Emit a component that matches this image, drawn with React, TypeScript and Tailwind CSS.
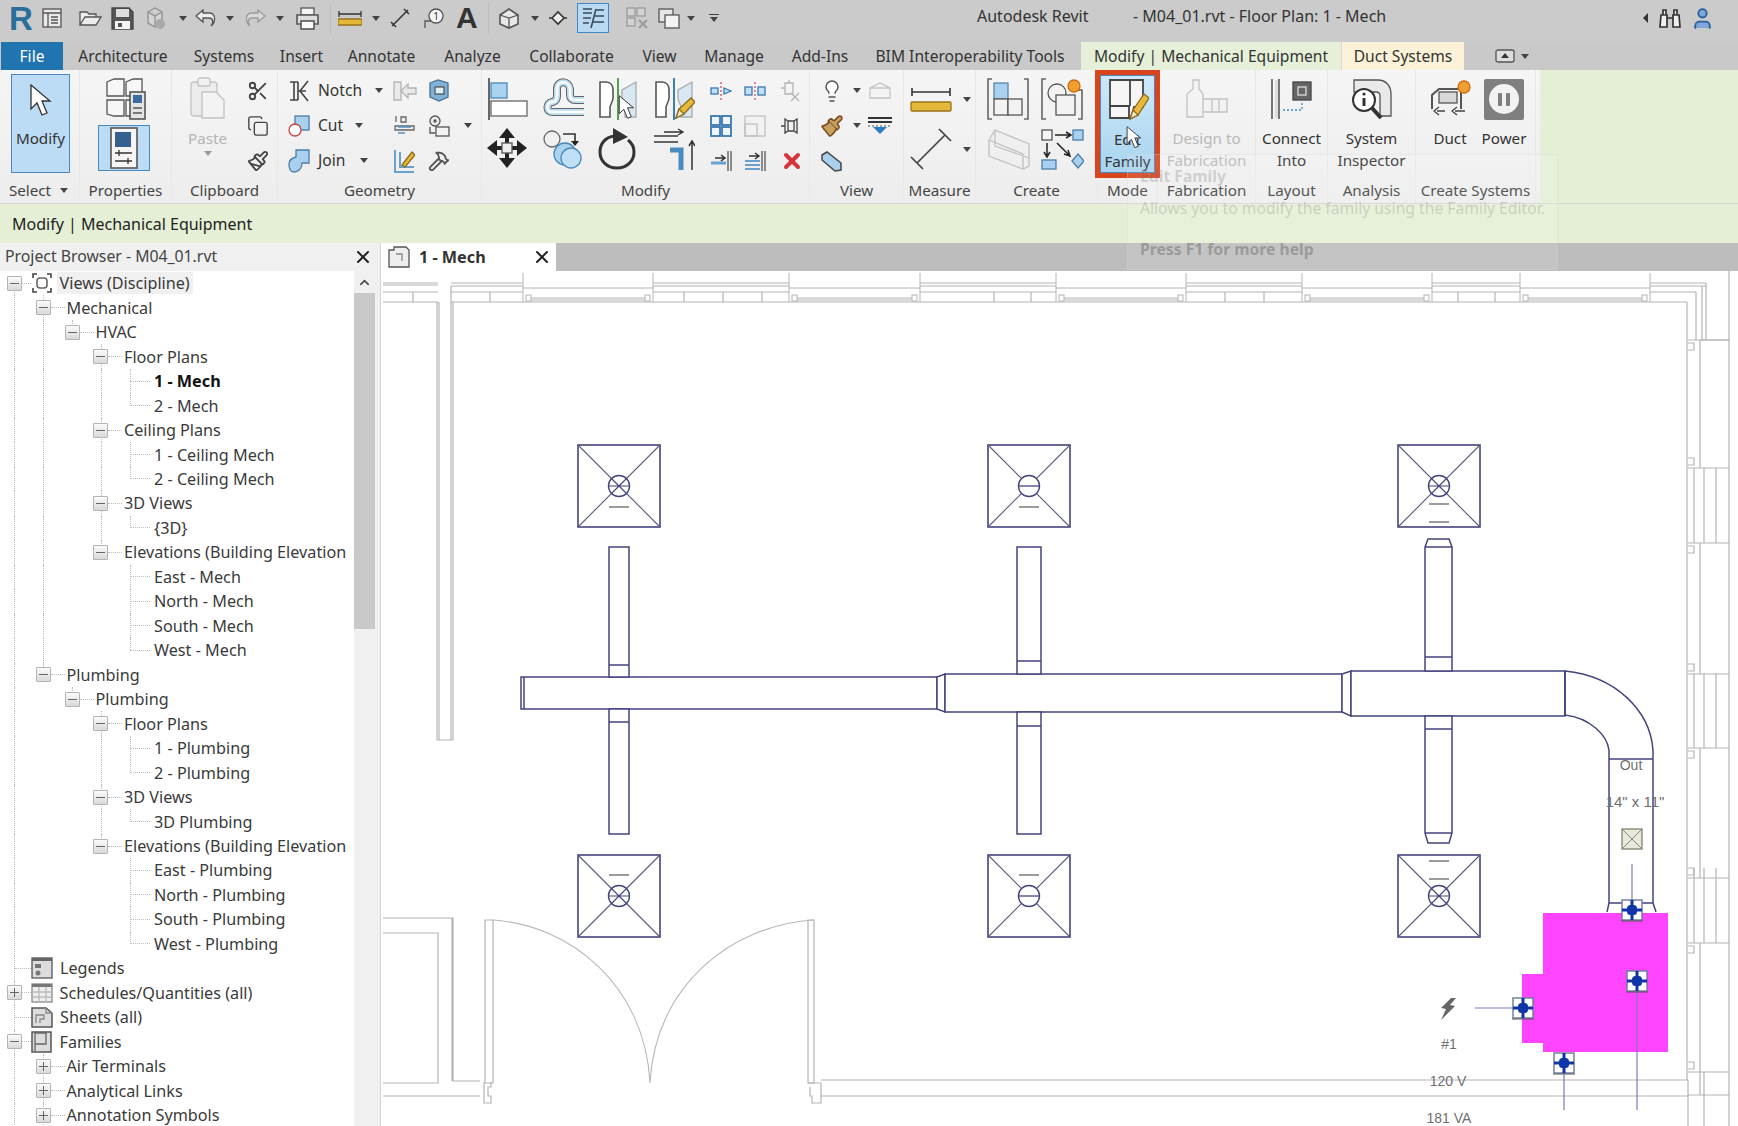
import type { ReactNode } from "react";
import { Scissors, Copy, Hammer, Paintbrush, Lightbulb, X, ChevronUp, User } from "lucide-react";

type IcoProps = { w: number; h: number; children: ReactNode; className?: string };

function Ico({ w, h, children, className }: IcoProps) {
  return (
    <svg width={w} height={h} viewBox={`0 0 ${w} ${h}`} fill="none" stroke="#555" strokeWidth={1.3} className={`block shrink-0 ${className ?? ""}`}>
      {children}
    </svg>
  );
}

function Caret({ faded }: { faded?: boolean }) {
  return (
    <svg width="8" height="5" viewBox="0 0 8 5" className="block shrink-0">
      <polygon points="0,0 8,0 4,5" fill={faded ? "#999" : "#444"} />
    </svg>
  );
}

/* ---------- quick access bar ---------- */

function QuickAccess() {
  return (
    <div className="flex items-center h-[42px] pb-[6px] bg-[#cbcbcb] text-[#333] relative">
      <span className="ml-[9px] w-[22px] text-[33px] leading-none font-bold text-[#2a6e9c] font-['Liberation_Sans',sans-serif]">R</span>
      <Ico w={20} h={22} className="ml-[11px]">
        <rect x="1" y="2" width="18" height="18" fill="#e8e8e8" />
        <path d="M1 6H19M6 6V20M9 10H16M9 13H16M9 16H16" />
      </Ico>
      <Ico w={24} h={20} className="ml-[16px]">
        <path d="M2 17V4H9L11 6H18V9M2 17L7 9H23L18 17Z" fill="#ececec" />
      </Ico>
      <Ico w={23} h={23} className="ml-[9px]">
        <path d="M1 1H18L22 5V22H1Z" fill="#555" stroke="#444" />
        <rect x="5" y="2" width="13" height="8" fill="#ddd" stroke="none" />
        <rect x="4" y="14" width="15" height="8" fill="#f4f4f4" stroke="none" />
        <rect x="7" y="16" width="4" height="4" fill="#555" stroke="none" />
      </Ico>
      <Ico w={24} h={24} className="ml-[9px] opacity-50">
        <path d="M5 6L12 2L19 6V17L12 21L5 17ZM5 6L12 10L19 6M12 10V21" fill="#ddd" />
        <circle cx="17" cy="18" r="5" fill="#888" stroke="none" />
      </Ico>
      <span className="ml-[12px]"><Caret /></span>
      <Ico w={22} h={18} className="ml-[7px]">
        <path d="M9 1L2 7L9 13V9H15C19 9 20 13 17 17C22 13 22 4 15 4H9Z" fill="#eee" />
      </Ico>
      <span className="ml-[10px]"><Caret /></span>
      <Ico w={22} h={18} className="ml-[11px] opacity-40">
        <path d="M13 1L20 7L13 13V9H7C3 9 2 13 5 17C0 13 0 4 7 4H13Z" fill="#eee" />
      </Ico>
      <span className="ml-[9px]"><Caret /></span>
      <Ico w={23} h={23} className="ml-[12px]">
        <rect x="5" y="1" width="13" height="7" fill="#f5f5f5" />
        <path d="M1 8H22V17H1Z" fill="#ddd" strokeWidth={1.6} />
        <rect x="5" y="14" width="13" height="8" fill="#fafafa" strokeWidth={1.6} />
      </Ico>
      <div className="ml-[11px] w-px h-[32px] bg-[#bdbdbd]" />
      <Ico w={24} h={16} className="ml-[7px]">
        <path d="M1 4H23M1 1V7M23 1V7" stroke="#333" />
        <rect x="0" y="9" width="24" height="6" rx="1" fill="#e4b93a" stroke="#97741a" />
      </Ico>
      <span className="ml-[10px]"><Caret /></span>
      <Ico w={22} h={22} className="ml-[9px]">
        <path d="M3 19L19 3M2 15L7 20M15 2L20 7" stroke="#333" strokeWidth={1.5} />
      </Ico>
      <Ico w={23} h={22} className="ml-[11px]">
        <circle cx="14" cy="9" r="7" fill="#f5f5f5" />
        <path d="M9 14L3 14V21" />
        <text x="14" y="13" fontSize="10" fill="#333" stroke="none" textAnchor="middle">1</text>
      </Ico>
      <span className="ml-[11px] w-[20px] text-[30px] leading-none font-bold text-[#333] font-['Liberation_Sans',sans-serif]">A</span>
      <div className="ml-[12px] w-px h-[32px] bg-[#bdbdbd]" />
      <Ico w={22} h={22} className="ml-[9px]">
        <path d="M2 8L11 2L20 8V17L11 21L2 17Z" fill="#e8e8e8" strokeWidth={1.6} />
        <path d="M2 8L11 11L20 8M11 11V21" />
      </Ico>
      <span className="ml-[11px]"><Caret /></span>
      <Ico w={20} h={20} className="ml-[9px]">
        <path d="M1 10H4M16 10H19M4 10L10 4L16 10L10 16Z" fill="#eee" stroke="#333" strokeWidth={1.6} />
      </Ico>
      <div className="ml-[9px] w-[32px] h-[30px] bg-[#b9d9f2] border border-[#3f88c5] flex items-center justify-center">
        <Ico w={24} h={22}>
          <path d="M2 2H11M2 6H11M2 11H10M2 16H8M15 3H23M14 9H23M12 15H23M10 21L15 2" stroke="#3a4a5a" strokeWidth={1.6} />
        </Ico>
      </div>
      <Ico w={22} h={22} className="ml-[17px] opacity-40">
        <rect x="1" y="1" width="8" height="8" fill="#ddd" />
        <rect x="11" y="1" width="8" height="8" fill="#ddd" />
        <rect x="1" y="11" width="8" height="8" fill="#ddd" />
        <path d="M13 13L21 21M21 13L13 21" strokeWidth={2} />
      </Ico>
      <Ico w={22} h={22} className="ml-[10px]">
        <rect x="1" y="2" width="14" height="13" fill="#e6e6e6" />
        <rect x="7" y="8" width="14" height="13" fill="#f3f3f3" />
      </Ico>
      <span className="ml-[7px]"><Caret /></span>
      <div className="ml-[14px] flex flex-col gap-[2px] items-center">
        <div className="w-[10px] h-px bg-[#444]" />
        <Caret />
      </div>
      <span className="ml-[258px] w-[130px] mb-[5px] text-[16px]">Autodesk Revit</span>
      <span className="ml-[26px] w-[300px] mb-[5px] text-[16px] whitespace-nowrap">- M04_01.rvt - Floor Plan: 1 - Mech</span>
      <svg width="5" height="10" viewBox="0 0 5 10" className="ml-[210px] block">
        <polygon points="5,0 5,10 0,5" fill="#333" />
      </svg>
      <Ico w={24} h={22} className="ml-[10px]">
        <path d="M3 8H9V20H2ZM15 8H21L22 20H15ZM9 11H15M5 8V3H8V8M16 8V3H19V8" fill="#f0f0f0" stroke="#333" strokeWidth={1.7} />
      </Ico>
      <User size={25} className="ml-[8px] text-[#2c5f9e] fill-[#7ea6d6]" strokeWidth={1.8} />
    </div>
  );
}

/* ---------- ribbon tabs ---------- */

const tabs = [
  { name: "Architecture", w: "w-[116px]" },
  { name: "Systems", w: "w-[86px]" },
  { name: "Insert", w: "w-[69px]" },
  { name: "Annotate", w: "w-[91px]" },
  { name: "Analyze", w: "w-[91px]" },
  { name: "Collaborate", w: "w-[107px]" },
  { name: "View", w: "w-[69px]" },
  { name: "Manage", w: "w-[80px]" },
  { name: "Add-Ins", w: "w-[92px]" },
  { name: "BIM Interoperability Tools", w: "w-[208px]" },
];

function RibbonTabs() {
  return (
    <div className="flex items-stretch h-[28px] bg-[#c9c9c9] text-[15.6px] leading-[28px] text-[#333]">
      <div className="ml-[1px] w-[62px] mr-[2px] bg-[#2074b0] text-white text-center">File</div>
      {tabs.map((tab) => (
        <div key={tab.name} className={`${tab.w} text-center whitespace-nowrap`}>
          {tab.name}
        </div>
      ))}
      <div className="ml-[7px] w-[260px] bg-[#e6f0d9] text-center whitespace-nowrap">Modify | Mechanical Equipment</div>
      <div className="w-[123px] bg-[#fbf2d8] text-center border-l border-[#d8d8d8]">Duct Systems</div>
      <div className="ml-[31px] flex items-center gap-[6px]">
        <Ico w={20} h={14}>
          <rect x="1" y="1" width="18" height="12" rx="2" fill="#ddd" />
          <polygon points="10,4 14,9 6,9" fill="#333" stroke="none" />
        </Ico>
        <Caret />
      </div>
    </div>
  );
}

/* ---------- ribbon ---------- */

function Panel({ w, label, children, caret }: { w: string; label: string; children: ReactNode; caret?: boolean }) {
  return (
    <div className={`${w} shrink-0 flex flex-col border-r border-[#e8e8e8]`}>
      <div className="h-[108px] flex">{children}</div>
      <div className={`h-[25px] flex items-center justify-center text-[15.2px] text-[#444] ${caret ? "gap-[9px] pr-[2px]" : ""}`}>
        {label}
        {caret && <Caret />}
      </div>
    </div>
  );
}

function BigTool({ icon, lines, faded, w }: { icon: ReactNode; lines: string[]; faded?: boolean; w: string }) {
  return (
    <div className={`${w} flex flex-col items-center pt-[8px]`}>
      <div className="h-[42px] flex items-center">{icon}</div>
      <div className={`mt-[7px] text-[15.2px] leading-[22px] text-center whitespace-nowrap ${faded ? "text-[#b9b9b9]" : "text-[#333]"}`}>
        {lines.map((line) => (
          <div key={line}>{line}</div>
        ))}
      </div>
    </div>
  );
}

function Arrow({ className }: { className?: string }) {
  return (
    <svg width="26" height="32" viewBox="0 0 26 32" className={`block ${className ?? ""}`}>
      <path d="M3 1V25L9 19L14 31L19 29L14 17H22Z" fill="#fff" stroke="#333" strokeWidth="1.3" />
    </svg>
  );
}

function DoorPair({ pencil }: { pencil?: boolean }) {
  return (
    <Ico w={41} h={42}>
      <path d="M2 4H8C13 4 15 8 15 12V20C15 24 12 26 12 30V39H2Z" fill="#fff" strokeWidth={1.6} />
      <path d="M38 4V39H27V30C27 26 24 24 24 20V12Z" fill="#d8e8f3" stroke="#aaa" />
      <path d="M20 0V42" stroke={pencil ? "#3b7fb5" : "#52a050"} strokeWidth={2} />
      {pencil && (
        <>
          <path d="M22 40L25 31L37 20L41 24L30 36Z" fill="#e9b93c" stroke="#8a6a20" />
          <path d="M22 40L25 31L30 36Z" fill="#f8e8c0" stroke="#8a6a20" />
        </>
      )}
    </Ico>
  );
}

const offsetPath = "M41 34H9C3 34 3 25 9 24H10C13 23 14 21 14 18V11C14 2 26 2 27 11V17C27 20 29 22 32 22H41";

function Ribbon() {
  return (
    <div className="flex h-[133px] bg-[#e4efd6]">
      <div className="flex w-[1540px] bg-gradient-to-b from-[#f5f5f5] to-[#ededed]">
        <Panel w="w-[80px]" label="Select" caret>
          <div className="ml-[11px] mt-[4px] w-[59px] h-[99px] bg-[#bcdcf5] border border-[#4a89bd] flex flex-col items-center">
            <Arrow className="mt-[9px]" />
            <span className="mt-[11px] text-[15.2px] leading-[22px] text-[#333]">Modify</span>
          </div>
        </Panel>
        <Panel w="w-[92px]" label="Properties">
          <div className="ml-[19px] flex flex-col items-center">
            <Ico w={42} h={42} className="mt-[8px]">
              <path d="M3 4L10 1H20V18H3ZM3 22H20V38H10L3 36Z" fill="#f7f7f7" />
              <path d="M22 4L29 1H38V18H22ZM22 22H30V38H22Z" fill="#f7f7f7" />
              <rect x="26" y="14" width="15" height="27" fill="#e4e4e4" strokeWidth={1.6} />
              <rect x="29" y="17" width="9" height="8" fill="#3e6c9e" stroke="none" />
              <path d="M29 30H38M29 35H38" />
            </Ico>
            <div className="mt-[5px] -ml-[1px] w-[52px] h-[46px] bg-[#bcdcf5] border border-[#4a89bd] flex items-center justify-center">
              <Ico w={28} h={42}>
                <rect x="1" y="1" width="26" height="40" fill="#f5f5f5" strokeWidth={1.6} />
                <rect x="5" y="5" width="16" height="15" fill="#35608f" stroke="none" />
                <path d="M5 26H22M5 34H22M9 23V29M18 31V37" stroke="#333" />
              </Ico>
            </div>
          </div>
        </Panel>
        <Panel w="w-[106px]" label="Clipboard">
          <div className="ml-[18px] w-[35px] flex flex-col items-center">
            <Ico w={35} h={42} className="mt-[7px] opacity-30">
              <rect x="1" y="5" width="26" height="34" rx="3" fill="#ddd" />
              <rect x="8" y="1" width="12" height="8" rx="2" fill="#eee" />
              <path d="M12 15H26L34 23V41H12Z" fill="#f3f3f3" />
            </Ico>
            <span className="mt-[8px] text-[15.2px] leading-[22px] text-[#b5b5b5]">Paste</span>
            <span className="mt-[2px]"><Caret faded /></span>
          </div>
          <div className="ml-[22px] mt-[3px] grid grid-rows-3 h-[105px] text-[#444]">
            <div className="flex items-center"><Scissors size={22} /></div>
            <div className="flex items-center"><Copy size={22} strokeWidth={1.5} /></div>
            <div className="flex items-center"><Paintbrush size={22} /></div>
          </div>
        </Panel>
        <Panel w="w-[204px]" label="Geometry">
          <div className="ml-[10px] w-[105px] mt-[3px] grid grid-rows-3 h-[105px] text-[15.6px] text-[#333]">
            <div className="flex items-center">
              <Ico w={22} h={22}>
                <path d="M2 2H10M2 20H10M6 2V20M10 2V20M20 1L12 11L20 21M10 11H18" stroke="#444" strokeWidth={1.6} />
              </Ico>
              <span className="ml-[8px]">Notch</span>
              <span className="ml-[13px]"><Caret /></span>
            </div>
            <div className="flex items-center">
              <Ico w={22} h={22}>
                <rect x="7" y="1" width="14" height="14" fill="#a9d0ee" stroke="#4a7ea8" />
                <circle cx="7" cy="15" r="6" fill="#fff" stroke="#c44" />
              </Ico>
              <span className="ml-[8px]">Cut</span>
              <span className="ml-[12px]"><Caret /></span>
            </div>
            <div className="flex items-center">
              <Ico w={22} h={24}>
                <path d="M8 1H21V14H14C14 20 10 23 6 23C2 23 1 19 1 15C1 11 4 9 8 8Z" fill="#a9d0ee" stroke="#4a7ea8" />
              </Ico>
              <span className="ml-[8px]">Join</span>
              <span className="ml-[15px]"><Caret /></span>
            </div>
          </div>
          <div className="w-[35px] mt-[3px] grid grid-rows-3 h-[105px]">
            <div className="flex items-center">
              <Ico w={24} h={22} className="opacity-40">
                <path d="M1 2H8V20H1ZM8 11L15 4V8H23V14H15V18Z" fill="#ddd" />
              </Ico>
            </div>
            <div className="flex items-center">
              <Ico w={22} h={22}>
                <path d="M3 1V7M8 2H13V7H8ZM2 11H21V15H2Z" stroke="#666" />
                <path d="M5 12H18M5 18H12" stroke="#5a8fbc" />
              </Ico>
            </div>
            <div className="flex items-center">
              <Ico w={22} h={24}>
                <path d="M2 1V23H21M7 3V18H21" stroke="#6ba0cc" strokeWidth={2} />
                <path d="M9 16L19 3L22 6L12 18Z" fill="#e9b93c" stroke="#8a6a20" />
              </Ico>
            </div>
          </div>
          <div className="w-[52px] mt-[3px] grid grid-rows-3 h-[105px]">
            <div className="flex items-center">
              <Ico w={22} h={24}>
                <path d="M2 4L10 1L20 4V18L11 22L2 18Z" fill="#7fb2d8" stroke="#4a6f8f" />
                <rect x="7" y="8" width="9" height="7" fill="#dff0fb" />
              </Ico>
            </div>
            <div className="flex items-center gap-[14px]">
              <Ico w={22} h={22}>
                <circle cx="7" cy="6" r="5" fill="#eee" />
                <circle cx="7" cy="6" r="1" fill="#555" />
                <rect x="8" y="12" width="13" height="9" fill="#f4f4f4" />
                <path d="M2 12V18H7" />
              </Ico>
              <Caret />
            </div>
            <div className="flex items-center text-[#555]"><Hammer size={22} /></div>
          </div>
        </Panel>
        <Panel w="w-[328px]" label="Modify">
          <div className="ml-[5px] mt-[8px] w-[222px] grid grid-cols-4 grid-rows-[42px_42px] gap-y-[8px]">
            <Ico w={41} h={42}>
              <path d="M2 0V42" stroke="#666" strokeWidth={2} />
              <rect x="4" y="5" width="16" height="15" fill="#a9d3f0" stroke="#4a88b8" />
              <rect x="4" y="23" width="36" height="15" fill="#fff" stroke="#666" />
            </Ico>
            <Ico w={41} h={42}>
              <path d={offsetPath} stroke="#666" strokeWidth={8} />
              <path d={offsetPath} stroke="#b9dcf3" strokeWidth={6} />
              <path d={offsetPath} stroke="#fff" strokeWidth={2.4} />
            </Ico>
            <div className="relative w-[41px] h-[42px]">
              <DoorPair />
              <Arrow className="absolute left-[19px] top-[17px] scale-75 origin-top-left" />
            </div>
            <DoorPair pencil />
            <Ico w={41} h={42}>
              <g fill="#222" stroke="none">
                <polygon points="20,0 28,10 12,10" />
                <polygon points="20,40 28,30 12,30" />
                <polygon points="0,20 10,12 10,28" />
                <polygon points="40,20 30,12 30,28" />
                <rect x="18" y="9" width="4" height="6" />
                <rect x="18" y="25" width="4" height="6" />
                <rect x="9" y="18" width="6" height="4" />
                <rect x="25" y="18" width="6" height="4" />
              </g>
              <rect x="15" y="15" width="10" height="10" fill="#eee" stroke="#555" />
            </Ico>
            <Ico w={40} h={42}>
              <circle cx="9" cy="11" r="8" fill="#f0f0f0" stroke="#666" />
              <path d="M20 6H32V14" stroke="#333" strokeWidth={1.6} />
              <polygon points="28,13 36,13 32,18" fill="#222" stroke="none" />
              <circle cx="22" cy="26" r="11" fill="#a9d3f0" stroke="#4a88b8" />
              <circle cx="28" cy="30" r="10" fill="#bfe0f6" stroke="#4a88b8" />
            </Ico>
            <Ico w={38} h={42}>
              <path d="M17 8C6 9 2 17 2 24C2 33 9 40 19 40C29 40 36 33 36 24C36 19 34 15 30 12" stroke="#333" strokeWidth={3} />
              <polygon points="15,0 30,9 15,16" fill="#333" stroke="none" />
            </Ico>
            <Ico w={41} h={42}>
              <path d="M0 8H24M0 14H24" stroke="#666" strokeWidth={2} />
              <path d="M16 22H27V42" stroke="#4a8bc0" strokeWidth={5} />
              <path d="M10 4H28M24 1L29 4L24 7" stroke="#333" />
              <path d="M38 42V14M35 18L38 13L41 18" stroke="#333" strokeWidth={1.5} />
            </Ico>
          </div>
          <div className="ml-[1px] mt-[3px] grid grid-cols-[34px_36px_22px] grid-rows-3 h-[105px] items-center">
            <Ico w={22} h={18}>
              <path d="M11 0V18" stroke="#d84a6a" strokeDasharray="2 2" />
              <rect x="1" y="6" width="7" height="6" fill="#bfe0f6" stroke="#3a78b0" />
              <path d="M14 6L21 9L14 12Z" fill="#bfe0f6" stroke="#3a78b0" />
            </Ico>
            <Ico w={22} h={18}>
              <path d="M11 0V18" stroke="#d84a6a" strokeDasharray="2 2" />
              <rect x="1" y="5" width="7" height="8" fill="#bfe0f6" stroke="#3a78b0" />
              <rect x="14" y="5" width="7" height="8" fill="#bfe0f6" stroke="#3a78b0" />
            </Ico>
            <Ico w={20} h={22} className="opacity-40">
              <path d="M1 8H5M5 3H13V14H5ZM9 3V0M11 13L19 21M19 13L11 21" />
            </Ico>
            <Ico w={22} h={22}>
              <g fill="#eef6fc" stroke="#3a78b0" strokeWidth={1.8}>
                <rect x="1" y="1" width="9" height="9" />
                <rect x="12" y="1" width="9" height="9" />
                <rect x="1" y="12" width="9" height="9" />
                <rect x="12" y="12" width="9" height="9" />
              </g>
            </Ico>
            <Ico w={22} h={22} className="opacity-30">
              <rect x="1" y="1" width="20" height="20" />
              <rect x="1" y="9" width="12" height="12" />
            </Ico>
            <Ico w={20} h={20}>
              <path d="M1 10H5M5 3L8 5H14L17 3V17L14 15H8L5 17ZM8 5V15M14 5V15" stroke="#444" />
            </Ico>
            <Ico w={22} h={22}>
              <path d="M18 1V21M21 1V21" stroke="#555" />
              <path d="M1 13H16" stroke="#6ba0cc" strokeWidth={3} />
              <path d="M5 8H15M11 5L15 8L11 11" stroke="#333" strokeWidth={1.5} />
            </Ico>
            <Ico w={22} h={22}>
              <path d="M18 1V21M21 1V21" stroke="#555" />
              <path d="M1 11H16M1 15H16M1 19H16" stroke="#6ba0cc" strokeWidth={2} />
              <path d="M5 6H15M11 3L15 6L11 9" stroke="#333" strokeWidth={1.5} />
            </Ico>
            <X size={24} strokeWidth={4} className="text-[#d8353a]" />
          </div>
        </Panel>
        <Panel w="w-[94px]" label="View">
          <div className="ml-[10px] mt-[3px] grid grid-cols-[48px_24px] grid-rows-3 h-[105px] items-center">
            <div className="flex items-center gap-[9px]">
              <Lightbulb size={24} className="text-[#555] fill-[#fff]" strokeWidth={1.5} />
              <Caret />
            </div>
            <Ico w={24} h={22} className="opacity-30">
              <path d="M2 8L12 3L22 8V18H2ZM2 8H22" />
            </Ico>
            <div className="flex items-center gap-[9px]">
              <Paintbrush size={24} className="text-[#7a4a20] fill-[#c8a060]" strokeWidth={1.5} />
              <Caret />
            </div>
            <Ico w={24} h={20}>
              <path d="M0 2H24M0 6H24" stroke="#333" strokeWidth={2} />
              <path d="M0 10H24" stroke="#888" strokeDasharray="2 2" />
              <polygon points="12,18 19,11 5,11" fill="#2f7ac0" stroke="none" />
            </Ico>
            <Ico w={22} h={22}>
              <path d="M2 5L7 2L21 13V20L15 21L2 10Z" fill="#a9d0ee" stroke="#444" strokeWidth={1.5} />
            </Ico>
          </div>
        </Panel>
        <Panel w="w-[72px]" label="Measure">
          <div className="ml-[6px] mt-[8px] flex flex-col gap-[8px]">
            <div className="h-[42px] flex items-center gap-[11px]">
              <Ico w={42} h={26}>
                <path d="M2 6H40M2 2V10M40 2V10" stroke="#333" strokeWidth={1.6} />
                <rect x="1" y="16" width="40" height="9" rx="1" fill="#e4b93a" stroke="#97741a" />
              </Ico>
              <Caret />
            </div>
            <div className="h-[42px] flex items-center gap-[11px]">
              <Ico w={42} h={42}>
                <path d="M7 35L35 7M1 29L13 41M29 1L41 13" stroke="#444" strokeWidth={1.7} />
              </Ico>
              <Caret />
            </div>
          </div>
        </Panel>
        <Panel w="w-[122px]" label="Create">
          <div className="ml-[11px] mt-[8px] grid grid-cols-[54px_44px] grid-rows-[42px_42px] gap-y-[8px]">
            <Ico w={42} h={42}>
              <path d="M5 1H1V41H5M37 1H41V41H37" stroke="#666" strokeWidth={1.6} />
              <rect x="7" y="5" width="14" height="16" fill="#a9d0ee" stroke="#5a87a8" />
              <rect x="7" y="21" width="14" height="16" fill="#f3f3f3" />
              <rect x="21" y="21" width="14" height="16" fill="#f3f3f3" />
            </Ico>
            <Ico w={42} h={42}>
              <path d="M5 1H1V41H5M37 12H41V41H37" stroke="#666" strokeWidth={1.6} />
              <circle cx="16" cy="15" r="9" fill="#f3f3f3" />
              <rect x="15" y="17" width="19" height="20" fill="#f3f3f3" />
              <circle cx="33" cy="8" r="6" fill="#f0a030" stroke="#d06a10" />
            </Ico>
            <Ico w={45} h={42} className="opacity-30">
              <path d="M2 12L8 2L42 16V38L36 41L2 28Z" fill="#eee" />
              <path d="M8 2V18L42 30M2 12L36 26V41" />
            </Ico>
            <Ico w={43} h={42}>
              <rect x="1" y="2" width="10" height="10" fill="#f5f5f5" />
              <rect x="32" y="2" width="10" height="10" fill="#a9d0ee" stroke="#4a7ea8" />
              <rect x="1" y="32" width="14" height="9" fill="#a9d0ee" stroke="#4a7ea8" />
              <path d="M31 33L37 26L43 33L37 40Z" fill="#a9d0ee" stroke="#4a7ea8" />
              <path d="M14 7H29M25 4L30 7L25 10M6 15V28M3 24L6 29L9 24M16 15L28 27M23 26L29 28L27 22" stroke="#222" strokeWidth={1.5} />
            </Ico>
          </div>
        </Panel>
        <Panel w="w-[60px]" label="Mode">
          <div className="-ml-[3px] w-[65px] h-[108px] shrink-0 border-[5px] border-[#d8451c] relative">
            <div className="h-full bg-gradient-to-b from-[#cde8f9] to-[#a8d4ef] border border-[#4a89bd] flex flex-col items-center pt-[3px] text-[15.2px] leading-[22px] text-[#333]">
              <Ico w={42} h={42}>
                <path d="M3 1H36V28H27L25 39H3Z" fill="#f5f5f5" strokeWidth={1.8} stroke="#444" />
                <path d="M3 27H22V39M23 1V27" stroke="#444" strokeWidth={1.8} />
                <path d="M23 40L26 31L37 15L42 19L31 36Z" fill="#e9b93c" stroke="#8a6a20" />
                <path d="M23 40L26 31L31 36Z" fill="#f8e8c0" stroke="#8a6a20" />
              </Ico>
              <div className="mt-[7px] text-center">
                <div>Edit</div>
                <div>Family</div>
              </div>
            </div>
            <Arrow className="absolute left-[25px] top-[51px] scale-[0.7] origin-top-left" />
          </div>
        </Panel>
        <Panel w="w-[98px]" label="Fabrication">
          <BigTool
            w="w-full"
            faded
            lines={["Design to", "Fabrication"]}
            icon={
              <Ico w={43} h={40} className="opacity-30">
                <path d="M8 1H14V10L18 15V38H2V15L8 10ZM18 20H42V33H18ZM27 20V33M34 20V33" />
              </Ico>
            }
          />
        </Panel>
        <Panel w="w-[72px]" label="Layout">
          <BigTool
            w="w-full"
            lines={["Connect", "Into"]}
            icon={
              <Ico w={41} h={42}>
                <path d="M1 1V41M8 1V41" stroke="#777" strokeWidth={2} />
                <rect x="4" y="2" width="3" height="38" fill="#ddd" stroke="none" />
                <rect x="22" y="4" width="18" height="18" fill="#666" stroke="#444" />
                <rect x="27" y="9" width="8" height="8" stroke="#ddd" />
                <path d="M12 32H31V22" stroke="#3a8ac8" strokeDasharray="2 2" />
              </Ico>
            }
          />
        </Panel>
        <Panel w="w-[88px]" label="Analysis">
          <BigTool
            w="w-full"
            lines={["System", "Inspector"]}
            icon={
              <Ico w={40} h={42}>
                <path d="M2 2H26C34 2 39 8 39 16V38H28V18C28 15 26 14 24 14H2Z" fill="#e9e9e9" />
                <circle cx="12" cy="22" r="11" fill="#fff" stroke="#333" strokeWidth={2} />
                <path d="M20 30L29 40" stroke="#333" strokeWidth={4} />
                <path d="M12 20V28" stroke="#333" strokeWidth={3} />
                <circle cx="12" cy="16" r="1.6" fill="#333" stroke="none" />
              </Ico>
            }
          />
        </Panel>
        <Panel w="w-[120px]" label="Create Systems">
          <BigTool
            w="w-[68px]"
            lines={["Duct"]}
            icon={
              <Ico w={43} h={40}>
                <path d="M3 30V16L10 10H32V30" stroke="#555" strokeWidth={2} />
                <rect x="10" y="13" width="18" height="11" fill="#d8d8d8" />
                <path d="M8 32H16M26 32H36M10 28L5 32L10 36M28 28L23 32L28 36" stroke="#444" />
                <circle cx="35" cy="8" r="6" fill="#f0a030" stroke="#d06a10" />
              </Ico>
            }
          />
          <BigTool
            w="w-[40px]"
            lines={["Power"]}
            icon={
              <div className="w-[40px] h-[41px] rounded-[2px] bg-[#7f7f7f] flex items-center justify-center">
                <div className="w-[30px] h-[30px] rounded-full bg-[#f2f2f2] flex items-center justify-center gap-[4px]">
                  <div className="w-[4px] h-[13px] bg-[#7f7f7f] rounded-[1px]" />
                  <div className="w-[4px] h-[13px] bg-[#7f7f7f] rounded-[1px]" />
                </div>
              </div>
            }
          />
        </Panel>
      </div>
    </div>
  );
}

/* ---------- project browser ---------- */

type TreeNode = { label: string; bold?: boolean; closed?: boolean; more?: boolean; icon?: string; children?: TreeNode[] };
type FlatRow = TreeNode & { depth: number; guides: number[]; last: boolean; first: boolean };

const leaves = (...names: string[]): TreeNode[] => names.map((label) => ({ label }));

const tree: TreeNode[] = [
  {
    label: "Views (Discipline)",
    icon: "views",
    children: [
      {
        label: "Mechanical",
        children: [
          {
            label: "HVAC",
            children: [
              { label: "Floor Plans", children: [{ label: "1 - Mech", bold: true }, { label: "2 - Mech" }] },
              { label: "Ceiling Plans", children: leaves("1 - Ceiling Mech", "2 - Ceiling Mech") },
              { label: "3D Views", children: leaves("{3D}") },
              { label: "Elevations (Building Elevation", children: leaves("East - Mech", "North - Mech", "South - Mech", "West - Mech") },
            ],
          },
        ],
      },
      {
        label: "Plumbing",
        children: [
          {
            label: "Plumbing",
            children: [
              { label: "Floor Plans", children: leaves("1 - Plumbing", "2 - Plumbing") },
              { label: "3D Views", children: leaves("3D Plumbing") },
              { label: "Elevations (Building Elevation", children: leaves("East - Plumbing", "North - Plumbing", "South - Plumbing", "West - Plumbing") },
            ],
          },
        ],
      },
    ],
  },
  { label: "Legends", icon: "legend" },
  { label: "Schedules/Quantities (all)", icon: "schedule", closed: true, children: [] },
  { label: "Sheets (all)", icon: "sheet" },
  {
    label: "Families",
    icon: "family",
    more: true,
    children: [
      { label: "Air Terminals", closed: true, children: [] },
      { label: "Analytical Links", closed: true, children: [] },
      { label: "Annotation Symbols", closed: true, more: true, children: [] },
    ],
  },
];

const levelX = [14, 43, 72, 100.5, 129.5];

function flatten(nodes: TreeNode[], depth: number, guides: number[], out: FlatRow[]) {
  nodes.forEach((node, i) => {
    const last = i === nodes.length - 1 && !node.more;
    out.push({ ...node, depth, guides, last, first: depth === 0 && i === 0 });
    if (node.children && !node.closed) {
      flatten(node.children, depth + 1, last ? guides : [...guides, levelX[depth]], out);
    }
  });
  return out;
}

function TreeIcon({ kind }: { kind: string }) {
  if (kind === "views") {
    return (
      <Ico w={22} h={22}>
        <path d="M2 6V2H6M16 2H20V6M20 16V20H16M6 20H2V16" stroke="#444" strokeWidth={1.6} />
        <rect x="6" y="6" width="10" height="10" rx="3" stroke="#666" strokeWidth={1.6} />
      </Ico>
    );
  }
  if (kind === "legend") {
    return (
      <Ico w={22} h={22}>
        <rect x="1" y="1" width="20" height="20" fill="#ddd" />
        <rect x="1" y="1" width="20" height="3" fill="#666" stroke="none" />
        <rect x="4" y="7" width="6" height="4" fill="#777" stroke="none" />
        <circle cx="7" cy="16" r="2.5" fill="#777" stroke="none" />
      </Ico>
    );
  }
  if (kind === "schedule") {
    return (
      <Ico w={22} h={20}>
        <rect x="1" y="1" width="20" height="18" fill="#eee" stroke="#888" />
        <rect x="1" y="1" width="20" height="3" fill="#777" stroke="none" />
        <path d="M1 9H21M1 14H21M8 4V19M15 4V19" stroke="#bbb" />
      </Ico>
    );
  }
  if (kind === "sheet") {
    return (
      <Ico w={22} h={21}>
        <path d="M1 1H15L21 6V20H1Z" fill="#ddd" strokeWidth={1.5} />
        <path d="M15 1V6H21M5 16V8H13V12H9V16" stroke="#888" />
      </Ico>
    );
  }
  return (
    <Ico w={21} h={22}>
      <rect x="1" y="1" width="19" height="20" fill="#ddd" strokeWidth={1.5} />
      <path d="M4 2H15V13H4ZM4 13V20" stroke="#666" />
    </Ico>
  );
}

function TreeRow({ row }: { row: FlatRow }) {
  const x = levelX[row.depth];
  const hasBox = row.children !== undefined;
  return (
    <div className="relative flex items-center h-[24.47px] whitespace-nowrap" style={{ paddingLeft: hasBox ? x - 7.5 : x }}>
      {row.guides.map((g) => (
        <span key={g} className="absolute top-0 bottom-0 border-l border-dotted border-[#bdbdbd]" style={{ left: g }} />
      ))}
      {!row.first && <span className={`absolute top-0 border-l border-dotted border-[#bdbdbd] ${row.last ? "h-1/2" : "bottom-0"}`} style={{ left: x }} />}
      {row.first && <span className="absolute top-1/2 bottom-0 border-l border-dotted border-[#bdbdbd]" style={{ left: x }} />}
      {hasBox ? (
        <span className="relative w-[15px] h-[15px] shrink-0 border border-[#b4b4b4] rounded-[1px] bg-gradient-to-b from-[#fbfbfb] to-[#d9d9d9] flex items-center justify-center">
          <span className="w-[9px] h-px bg-[#666]" />
          {row.closed && <span className="absolute w-px h-[9px] bg-[#666]" />}
        </span>
      ) : null}
      <span
        className={`h-px border-t border-dotted border-[#bdbdbd] ${row.icon ? "w-[9px]" : hasBox ? "w-[14px] mr-[2px]" : "w-[20px] mr-[4.5px]"} ${row.icon && !hasBox ? "ml-[1px] w-[16px]" : ""}`}
      />
      {row.icon && (
        <span className="w-[22px] mr-[7px] flex justify-center shrink-0">
          <TreeIcon kind={row.icon} />
        </span>
      )}
      <span className={`text-[16.2px] leading-[22px] ${row.bold ? "font-bold text-[#111]" : "text-[#3a3a3a]"} ${row.icon === "views" ? "bg-[#f0f0f0] pr-[3px] pl-[3px] -ml-[3px]" : ""}`}>
        {row.label}
      </span>
    </div>
  );
}

function ProjectBrowser() {
  const rows = flatten(tree, 0, [], []);
  return (
    <div className="w-[381px] shrink-0 flex flex-col bg-[#f0f0f0] border-r border-[#d4d4d4]">
      <div className="h-[28px] flex items-center justify-between pl-[5px] pr-[7px] text-[15.8px] text-[#444]">
        <span>Project Browser - M04_01.rvt</span>
        <X size={20} strokeWidth={2.4} className="text-[#222]" />
      </div>
      <div className="flex-1 flex pr-[5px] overflow-hidden">
        <div className="w-[354px] bg-white overflow-hidden">
          {rows.map((row, i) => (
            <TreeRow key={`${row.label}-${i}`} row={row} />
          ))}
        </div>
        <div className="w-[21px] flex flex-col items-center bg-[#f0f0f0]">
          <div className="h-[22px] flex items-center">
            <ChevronUp size={15} strokeWidth={2.4} className="text-[#444]" />
          </div>
          <div className="w-full h-[336px] bg-[#c9c9c9]" />
        </div>
      </div>
    </div>
  );
}

/* ---------- drawing ---------- */

const wallColor = "#b4b4b4";
const ductColor = "#44447f";

function Diffuser({ x, y, round, bars }: { x: number; y: number; round?: boolean; bars: number[] }) {
  const cx = x + 41;
  const cy = y + 41;
  const s = 82;
  return (
    <g stroke={ductColor} fill="none">
      <rect x={x} y={y} width={s} height={s} strokeWidth="1.6" />
      <path d={`M${x} ${y}L${x + s} ${y + s}M${x + s} ${y}L${x} ${y + s}`} strokeWidth="1.1" stroke="#5a5a7c" />
      <circle cx={cx} cy={cy} r="10.5" fill="#fff" strokeWidth="1.4" />
      {round ? (
        <path d={`M${cx - 10} ${cy}H${cx + 10}`} strokeWidth="1.3" />
      ) : (
        <path d={`M${cx - 8} ${cy - 8}L${cx + 8} ${cy + 8}M${cx + 8} ${cy - 8}L${cx - 8} ${cy + 8}M${cx - 10} ${cy}H${cx + 10}`} strokeWidth="1.1" />
      )}
      {bars.map((b) => (
        <path key={b} d={`M${cx - 10} ${b}H${cx + 10}`} stroke="#666" strokeWidth="1.3" />
      ))}
    </g>
  );
}

function Connector({ x, y }: { x: number; y: number }) {
  return (
    <g>
      <rect x={x - 10} y={y - 10} width="20" height="20" fill="#fff" stroke="#6a7a9a" strokeWidth="1.4" />
      <path d={`M${x - 10} ${y}H${x + 10}M${x} ${y - 10}V${y + 10}`} stroke="#0f35a8" strokeWidth="3" />
      <rect x={x - 5} y={y - 5} width="10" height="10" rx="3.5" fill="#0f35a8" />
      <path d={`M${x - 11} ${y + 11}H${x + 11}`} stroke="#555" />
    </g>
  );
}

function Window({ a, b }: { a: number; b: number }) {
  return (
    <g stroke={wallColor} fill="none">
      <path d={`M${a} 273V302M${b} 273V302M${a} 288H${b}M${a + 8} 298H${b - 8}M${a + 8} 300H${b - 8}`} />
      <rect x={a + 3} y={295} width="5" height="6" />
      <rect x={b - 8} y={295} width="5" height="6" />
    </g>
  );
}

function Drawing() {
  const wallRuns = [
    [451, 523],
    [653, 789],
    [920, 1056],
    [1186, 1302],
    [1432, 1520],
    [1650, 1706],
  ];
  const ticks = [490, 684, 723, 762, 994, 1031, 1225, 1264, 1458, 1495];
  const windows = [
    [523, 653],
    [789, 920],
    [1056, 1186],
    [1302, 1432],
    [1520, 1650],
  ];
  const sideWindows = [
    [340, 468],
    [543, 674],
    [748, 878],
    [943, 1072],
  ];
  return (
    <svg width="1357" height="855" viewBox="381 271 1357 855" className="block bg-white" fill="none">
      {/* walls */}
      <g stroke={wallColor} strokeWidth="1.2">
        <path d="M383 283H438M383 285H438M383 292H438M383 302H438M413 292V302" />
        {wallRuns.map(([a, b]) => (
          <path key={a} d={`M${a} 283H${b}M${a} 286H${b}M${a} 292H${Math.min(b, 1696)}`} />
        ))}
        {ticks.map((t) => (
          <path key={t} d={`M${t} 292V302`} />
        ))}
        <path d="M451 302H1687M1687 302V1080M1696 292V340M1702 286V340M1706 283V340M1729 271V1126M1700 340H1729" />
        <path d="M437 302V740M439 302V740M451 286V740M453 302V740M437 740H453" />
        {sideWindows.map(([a, b]) => (
          <g key={a}>
            <path d={`M1688 ${a}H1700M1700 ${a}V${b}M1688 ${b}H1729M1700 ${a}H1729M1688 ${a + 3}H1694V${a + 10}H1688M1688 ${b - 3}H1694V${b - 10}H1688`} />
            {a > 340 && <path d={`M1704 ${a - 75}V${a}M1716 ${a - 75}V${a}M1694 ${a - 75}V${a}`} />}
          </g>
        ))}
        <path d="M383 918H453V1081H480M383 933H438V1083H383M383 1096H480M452 918V1081M484 1082V1103H491V1096H488V1087H491V1082" />
        <path d="M485 920H493V1083H485ZM808 920H814V1083H808Z" />
        <path d="M821 1080H1688M821 1096H1688M808 1083H821V1103H812V1096H810V1087M1688 1080V1095M1700 1072V1095M1704 1072V1095M1688 1095H1729M1704 1095V1126M1688 1095V1126" />
      </g>
      {windows.map(([a, b]) => (
        <Window key={a} a={a} b={b} />
      ))}
      {/* door swings */}
      <path d="M493 920C570 925 645 985 650 1083M814 920C732 925 655 985 650 1083" stroke="#b8b8b8" strokeWidth="1.1" />

      {/* ducts */}
      <g stroke={ductColor} strokeWidth="1.5" fill="#fff">
        <path d="M521 677H937V709H521ZM524 677V709" />
        <path d="M937 677L945 674V712L937 709Z" />
        <path d="M945 674H1342V712H945Z" />
        <path d="M1342 674L1351 671V716L1342 712Z" />
        <path d="M1351 671H1565V716H1351Z" />
        <path d="M609 547H629V677H609ZM609 665H629M609 709H629V834H609ZM609 722H629" />
        <path d="M1017 547H1041V674H1017ZM1017 661H1041M1017 712H1041V834H1017ZM1017 726H1041" />
        <path d="M1425 547L1428 539H1449L1452 547V671H1425ZM1425 547H1452M1425 657H1452M1425 716H1452V833L1449 843H1428L1425 833ZM1425 729H1452M1425 833H1452" />
        <path d="M1565 671C1615 676 1650 710 1653 750V903H1609V750C1607 735 1590 718 1565 715Z" />
        <path d="M1565 671V715M1609 759H1653M1609 903L1607 912M1653 903L1656 912" fill="none" />
      </g>
      <Diffuser x={578} y={445} bars={[507]} />
      <Diffuser x={988} y={445} round bars={[507]} />
      <Diffuser x={1398} y={445} bars={[504, 522]} />
      <Diffuser x={578} y={855} bars={[875]} />
      <Diffuser x={988} y={855} round bars={[875]} />
      <Diffuser x={1398} y={855} bars={[861, 879]} />

      {/* mechanical equipment */}
      <rect x="1543" y="913" width="125" height="139" fill="#ff44ff" />
      <rect x="1522" y="974" width="21" height="69" fill="#ff44ff" />
      <g stroke="#8078bb" strokeWidth="1.2">
        <path d="M1632 864V900M1637 990V1110M1564 1072V1110M1475 1008H1513" />
      </g>
      <rect x="1622" y="829" width="20" height="20" fill="#e8e8dc" stroke="#8a8a7a" strokeWidth="1.4" />
      <path d="M1622 829L1642 849M1642 829L1622 849" stroke="#8a8a7a" />
      <Connector x={1632} y={910} />
      <Connector x={1637} y={981} />
      <Connector x={1523} y={1008} />
      <Connector x={1564} y={1063} />
      <polygon points="1451,998 1441,1008 1446,1009 1441,1020 1455,1006 1450,1005 1456,998" fill="#666" />
      <g fill="#6f6f6f" fontSize="14" fontFamily="'Liberation Sans', sans-serif" textAnchor="middle">
        <text x="1631" y="770">Out</text>
        <text x="1635" y="807" fontSize="15">14" x 11"</text>
        <text x="1449" y="1049">#1</text>
        <text x="1448" y="1086">120 V</text>
        <text x="1449" y="1123">181 VA</text>
      </g>
    </svg>
  );
}

/* ---------- page ---------- */

export default function App() {
  return (
    <div className="relative w-[1738px] h-[1126px] overflow-hidden bg-white font-['Noto_Sans',sans-serif] flex flex-col">
      <QuickAccess />
      <RibbonTabs />
      <Ribbon />
      <div className="h-[40px] shrink-0 flex items-center pl-[12px] pt-[1px] bg-[#e4efd6] border-t border-[#d6d6d6] text-[16px] text-[#222]">
        Modify | Mechanical Equipment
      </div>
      <div className="flex flex-1 min-h-0">
        <ProjectBrowser />
        <div className="flex-1 flex flex-col min-w-0">
          <div className="h-[28px] shrink-0 flex bg-[#bdbdbd]">
            <div className="w-[175px] bg-white flex items-center pl-[7px]">
              <Ico w={22} h={22}>
                <path d="M1 4H6V1H18L21 4V21H1Z" fill="#eee" />
                <path d="M8 8H14V15" stroke="#888" />
              </Ico>
              <span className="ml-[9px] text-[16.2px] font-bold text-[#333]">1 - Mech</span>
              <X size={20} strokeWidth={2.4} className="ml-[46px] text-[#222]" />
            </div>
          </div>
          <Drawing />
        </div>
      </div>
      {/* fading tooltip */}
      <div className="absolute left-[1127px] top-[154px] w-[431px] h-[116px] bg-white/10 border border-[#cfcfcf]/30 pl-[12px] pt-[10px] text-[15.7px] text-[#666]/25">
        <div className="font-bold">Edit Family</div>
        <div className="mt-[8px] whitespace-nowrap">Allows you to modify the family using the Family Editor.</div>
        <div className="mt-[18px] font-bold text-[#555]/40">Press F1 for more help</div>
      </div>
    </div>
  );
}
